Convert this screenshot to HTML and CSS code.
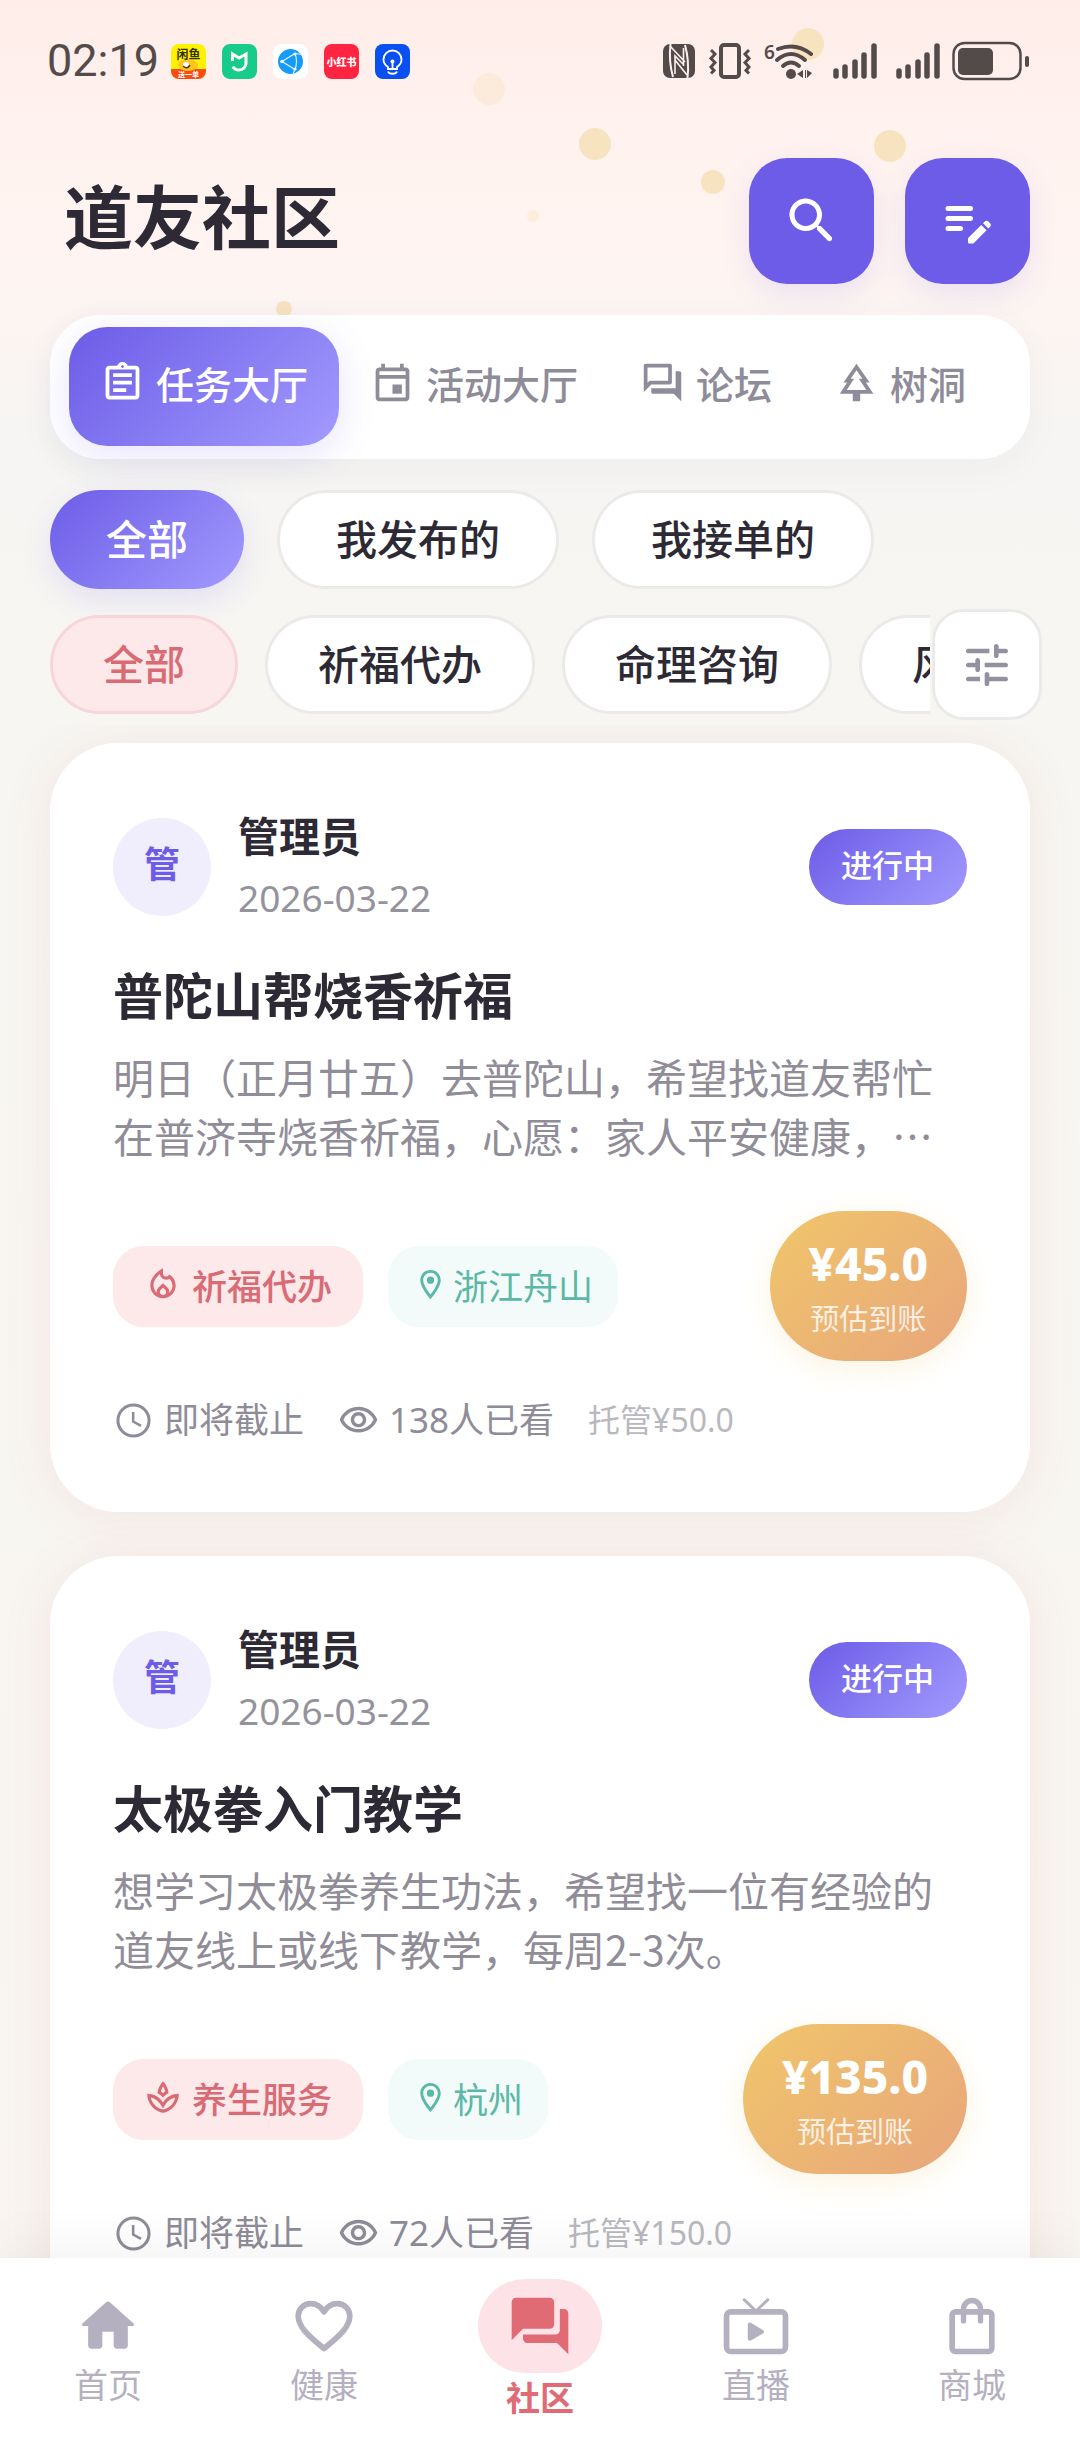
FILE: index.html
```html
<!DOCTYPE html>
<html lang="zh-CN">
<head>
    <meta charset="UTF-8">
    <meta name="viewport" content="width=device-width, initial-scale=1.0">
    <title>道友社区</title>
    <link rel="stylesheet" href="styles.css">
</head>
<body>

    <!-- Ícones reutilizados -->
    <svg class="sprite" aria-hidden="true">
        <symbol id="i-forum" viewBox="0 0 24 24"><path d="M15 4v7H5.17L4 12.17V4h11m1-2H3c-.55 0-1 .45-1 1v14l4-4h10c.55 0 1-.45 1-1V3c0-.55-.45-1-1-1zm5 4h-2v9H6v2c0 .55.45 1 1 1h11l4 4V7c0-.55-.45-1-1-1z"/></symbol>
        <symbol id="i-place" viewBox="0 0 24 24"><path d="M12 2C8.13 2 5 5.13 5 9c0 5.25 7 13 7 13s7-7.75 7-13c0-3.87-3.13-7-7-7zM7 9c0-2.76 2.24-5 5-5s5 2.24 5 5c0 2.88-2.88 7.19-5 9.88C9.92 16.21 7 11.85 7 9z"/><circle cx="12" cy="9" r="2.5"/></symbol>
        <symbol id="i-clock" viewBox="0 0 24 24"><circle cx="12" cy="12" r="9.1" fill="none" stroke="currentColor" stroke-width="1.8"/><path d="M11.8 7v5.6l4.6 2.6" fill="none" stroke="currentColor" stroke-width="1.5"/></symbol>
        <symbol id="i-eye" viewBox="0 0 24 24"><path d="M12 6c3.79 0 7.17 2.13 8.82 5.5C19.17 14.87 15.79 17 12 17s-7.17-2.13-8.82-5.5C4.83 8.13 8.21 6 12 6m0-2C7 4 2.73 7.11 1 11.5 2.73 15.89 7 19 12 19s9.27-3.11 11-7.5C21.27 7.11 17 4 12 4zm0 5c1.38 0 2.5 1.12 2.5 2.5S13.38 14 12 14s-2.5-1.12-2.5-2.5S10.62 9 12 9m0-2c-2.48 0-4.5 2.02-4.5 4.5S9.52 16 12 16s4.5-2.02 4.5-4.5S14.48 7 12 7z"/></symbol>
        <symbol id="i-signal" viewBox="0 0 44 36"><path d="M3 28v5M12 24v9M22 19v14M31 12v21M41 3v30" fill="none" stroke="currentColor" stroke-width="5.5" stroke-linecap="round"/></symbol>
    </svg>

    <!-- Bolhas do fundo -->
    <div class="bubbles" aria-hidden="true">
        <span class="bubble b1"></span>
        <span class="bubble b2"></span>
        <span class="bubble b3"></span>
        <span class="bubble b4"></span>
        <span class="bubble b5"></span>
        <span class="bubble b6"></span>
        <span class="bubble b7"></span>
    </div>

    <div class="status-bar">
        <span class="time">02:19</span>
        <div class="app-icons">
            <svg viewBox="0 0 35 35"><defs><clipPath id="r"><rect width="35" height="35" rx="8"/></clipPath></defs><g clip-path="url(#r)"><rect width="35" height="35" fill="#fff200"/><rect y="25" width="35" height="10" fill="#fb4a12"/><ellipse cx="17" cy="21" rx="10" ry="6" fill="#ffc51f"/><circle cx="15" cy="21" r="3" fill="#fff"/><path d="M12 22q4 4 7-1" stroke="#5a3410" stroke-width="1.5" fill="none"/></g><text x="17.5" y="14.5" font-size="12" font-weight="700" text-anchor="middle" fill="#333000">闲鱼</text><text x="17.5" y="32.5" font-size="7" font-weight="700" text-anchor="middle" fill="#fff">送一单</text></svg>
            <svg viewBox="0 0 35 35"><rect width="35" height="35" rx="8" fill="#17cc8a"/><path d="M10.5 17v-7l6.5 4 7-4v9c0 4-3 7-7 7-3 0-5-1-6-3.5" fill="none" stroke="#fff" stroke-width="3"/></svg>
            <svg viewBox="0 0 35 35"><rect width="35" height="35" rx="8" fill="#fff"/><circle cx="17.5" cy="17.5" r="12.5" fill="#159bf8"/><path d="M9 17.5 22 9.5q3 8 0 16L9 17.5M22 9.5l7 1M22 25.5l-2 4" fill="none" stroke="#d6f1ff" stroke-width="1.2"/><g fill="#fff"><circle cx="9" cy="17.5" r="1.8"/><circle cx="22" cy="10" r="1.6"/><circle cx="22" cy="25" r="1.6"/></g></svg>
            <svg viewBox="0 0 35 35"><rect width="35" height="35" rx="8" fill="#ff2442"/><text x="17.5" y="21.5" font-size="10" font-weight="900" text-anchor="middle" fill="#fff">小红书</text></svg>
            <svg viewBox="0 0 35 35"><rect width="35" height="35" rx="8" fill="#0a50f0"/><path d="M13 25v-2c-3-2-4.5-4.5-4.5-7.5a9 9 0 0 1 18 0c0 3-1.5 5.5-4.5 7.5v2zM13 27.5c1 3 8 3 9 0M17.5 24v-6" fill="none" stroke="#fff" stroke-width="1.8"/><circle cx="17.5" cy="17.5" r="2" fill="#fff"/></svg>
        </div>
        <div class="sys-icons">
            <svg width="34" height="36" viewBox="0 0 34 36"><rect x="1" y="1" width="32" height="34" rx="7" fill="#534b49"/><path d="M8.5 1q-2 17 2.5 33M25.5 35q2-17-2.5-33" fill="none" stroke="#fff0ed" stroke-width="2"/><path d="M13 31V13l9 9M21.5 5v18M8 3l15 16M13 17l12 15" fill="none" stroke="#fff0ed" stroke-width="1.6"/></svg>
            <svg width="44" height="38" viewBox="0 0 44 38"><rect x="13" y="3" width="18" height="32" rx="3" fill="none" stroke="#534b49" stroke-width="4"/><path d="m3 8 4 4-4 4.5 4 4-4 4.5 3 3.5-3 3M41 8l-4 4 4 4.5-4 4 4 4.5-3 3.5 3 3" fill="none" stroke="#534b49" stroke-width="3"/></svg>
            <svg width="50" height="42" viewBox="0 0 50 42"><g fill="none" stroke="#534b49" stroke-width="4" stroke-linecap="round"><path d="M14 9q18-7 33 5"/><path d="M13 20q14-12 28 0"/><path d="M19 26q8-7 16 0"/></g><circle cx="27" cy="34" r="5" fill="#534b49"/><path d="M39 30v8l-6-4zM41 30h1v8h-1zM43 30l5 3-5 5z" fill="#534b49"/><text x="0" y="19" font-size="19" font-weight="600" fill="#534b49">6</text></svg>
            <svg class="signal" width="44" height="36"><use href="#i-signal"/></svg>
            <svg class="signal" width="44" height="36"><use href="#i-signal"/></svg>
            <svg width="78" height="40" viewBox="0 0 78 40"><rect x="1.5" y="2" width="67" height="36" rx="11" fill="none" stroke="#534b49" stroke-width="2.5"/><rect x="6" y="7" width="35" height="27" rx="5" fill="#534b49"/><rect x="73" y="15" width="4" height="11" rx="2" fill="#534b49"/></svg>
        </div>
    </div>

    <header class="header">
        <h1>道友社区</h1>
        <div class="actions">
            <button class="action" aria-label="搜索">
                <svg viewBox="0 0 24 24"><path d="M15.5 14h-.79l-.28-.27c1.2-1.4 1.82-3.31 1.48-5.34-.47-2.78-2.79-5-5.59-5.34-4.23-.52-7.79 3.04-7.27 7.27.34 2.8 2.56 5.12 5.34 5.59 2.03.34 3.94-.28 5.34-1.48l.27.28v.79l4.25 4.25c.41.41 1.08.41 1.49 0 .41-.41.41-1.08 0-1.49L15.5 14zm-6 0C7.01 14 5 11.99 5 9.5S7.01 5 9.5 5 14 7.01 14 9.5 11.99 14 9.5 14z"/></svg>
            </button>
            <button class="action" aria-label="发布">
                <svg viewBox="0 0 24 24"><path d="M4 7h9M4 11h9M4 15h5" fill="none" stroke="currentColor" stroke-width="2" stroke-linecap="round"/><path d="M18.01 12.87l.71-.71c.39-.39 1.02-.39 1.41 0l.71.71c.39.39.39 1.02 0 1.41l-.71.71-2.12-2.12zm-.71.71l-5.16 5.16c-.09.09-.14.21-.14.35v1.41c0 .28.22.5.5.5h1.41c.13 0 .26-.05.35-.15l5.16-5.16-2.12-2.11z"/></svg>
            </button>
        </div>
    </header>

    <nav class="tabs">
        <button class="tab active">
            <svg viewBox="0 0 24 24"><path d="M7 15h7v2H7zm0-4h10v2H7zm0-4h10v2H7zm12-4h-4.18C14.4 1.84 13.3 1 12 1s-2.4.84-2.82 2H5c-1.1 0-2 .9-2 2v14c0 1.1.9 2 2 2h14c1.1 0 2-.9 2-2V5c0-1.1-.9-2-2-2zm-7-.25c.41 0 .75.34.75.75s-.34.75-.75.75-.75-.34-.75-.75.34-.75.75-.75zM19 19H5V5h14v14z"/></svg>
            任务大厅
        </button>
        <button class="tab">
            <svg viewBox="0 0 24 24"><path d="M19 4h-1V2h-2v2H8V2H6v2H5c-1.11 0-1.99.9-1.99 2L3 20c0 1.1.89 2 2 2h14c1.1 0 2-.9 2-2V6c0-1.1-.9-2-2-2zm0 16H5V10h14v10zm0-12H5V6h14v2zm-7 5h5v5h-5z"/></svg>
            活动大厅
        </button>
        <button class="tab">
            <svg><use href="#i-forum"/></svg>
            论坛
        </button>
        <button class="tab">
            <svg viewBox="0 0 24 24"><path d="M17 12h2L12 2 5.05 12H7l-3.9 6h6.92v4h3.95v-4H21l-4-6zM6.79 16l3.9-6H8.88l3.13-4.5 3.15 4.5h-1.9l4 6H6.79z"/></svg>
            树洞
        </button>
    </nav>

    <div class="scope">
        <button class="chip active">全部</button>
        <button class="chip">我发布的</button>
        <button class="chip">我接单的</button>
    </div>

    <div class="filters">
        <div class="categories">
            <button class="chip selected">全部</button>
            <button class="chip">祈福代办</button>
            <button class="chip">命理咨询</button>
            <button class="chip">风水布局</button>
        </div>
        <button class="filter-button" aria-label="筛选">
            <svg viewBox="0 0 24 24"><path d="M3 18c0 .55.45 1 1 1h5v-2H4c-.55 0-1 .45-1 1zM3 6c0 .55.45 1 1 1h9V5H4c-.55 0-1 .45-1 1zm10 14v-1h7c.55 0 1-.45 1-1s-.45-1-1-1h-7v-1c0-.55-.45-1-1-1s-1 .45-1 1v4c0 .55.45 1 1 1s1-.45 1-1zM7 10v1H4c-.55 0-1 .45-1 1s.45 1 1 1h3v1c0 .55.45 1 1 1s1-.45 1-1v-4c0-.55-.45-1-1-1s-1 .45-1 1zm14 2c0-.55-.45-1-1-1h-9v2h9c.55 0 1-.45 1-1zm-5-3c.55 0 1-.45 1-1V7h3c.55 0 1-.45 1-1s-.45-1-1-1h-3V4c0-.55-.45-1-1-1s-1 .45-1 1v4c0 .55.45 1 1 1z"/></svg>
        </button>
    </div>

    <main class="list">
        <article class="card">
            <div class="card-top">
                <div class="avatar">管</div>
                <div class="author">
                    <div class="name">管理员</div>
                    <time class="date">2026-03-22</time>
                </div>
                <span class="state">进行中</span>
            </div>
            <h2>普陀山帮烧香祈福</h2>
            <p class="desc">明日（正月廿五）去普陀山，希望找道友帮忙<br>在普济寺烧香祈福，心愿：家人平安健康，…</p>
            <div class="card-mid">
                <span class="tag">
                    <svg viewBox="0 0 24 24"><path d="M16 6l-.44.55C14.38 8.02 12 7.19 12 5.3V2S4 6 4 13c0 4.42 3.58 8 8 8s8-3.58 8-8c0-2.96-1.61-5.62-4-7zm-4 13c-1.1 0-2-.87-2-1.94 0-.51.2-.99.58-1.36L12 14.3l1.43 1.4c.37.37.57.85.57 1.36 0 1.07-.9 1.94-2 1.94zm3.96-1.5c.04-.36.22-1.89-1.13-3.22L12 11.5l-2.83 2.78C7.81 15.62 8 17.16 8.04 17.5 6.79 16.4 6 14.79 6 13c0-3.16 2.13-5.65 4.03-7.25.23 1.99 1.93 3.55 3.99 3.55.78 0 1.54-.23 2.18-.66A7.175 7.175 0 0 1 18 13c0 1.79-.79 3.4-2.04 4.5z"/></svg>
                    祈福代办
                </span>
                <span class="tag place">
                    <svg><use href="#i-place"/></svg>
                    浙江舟山
                </span>
                <div class="price">
                    <strong>¥45.0</strong>
                    <span>预估到账</span>
                </div>
            </div>
            <div class="meta">
                <span class="meta-item"><svg><use href="#i-clock"/></svg>即将截止</span>
                <span class="meta-item"><svg><use href="#i-eye"/></svg>138人已看</span>
                <span class="escrow">托管¥50.0</span>
            </div>
        </article>

        <article class="card">
            <div class="card-top">
                <div class="avatar">管</div>
                <div class="author">
                    <div class="name">管理员</div>
                    <time class="date">2026-03-22</time>
                </div>
                <span class="state">进行中</span>
            </div>
            <h2>太极拳入门教学</h2>
            <p class="desc">想学习太极拳养生功法，希望找一位有经验的<br>道友线上或线下教学，每周2-3次。</p>
            <div class="card-mid">
                <span class="tag">
                    <svg viewBox="0 0 24 24"><path d="M15.49 9.63c-.18-2.79-1.31-5.51-3.43-7.63-2.14 2.14-3.32 4.86-3.55 7.63 1.28.68 2.46 1.56 3.49 2.63 1.03-1.06 2.21-1.94 3.49-2.63zm-3.44-4.44c.63 1.03 1.07 2.18 1.3 3.38-.47.3-.91.63-1.34.98-.42-.34-.87-.67-1.33-.97.25-1.2.71-2.35 1.37-3.39zM12 15.45C9.85 12.17 6.18 10 2 10c0 5.32 3.36 9.82 8.03 11.49.63.23 1.29.4 1.97.51.68-.12 1.33-.29 1.97-.51C18.64 19.82 22 15.32 22 10c-4.18 0-7.85 2.17-10 5.45zm1.32 4.15c-.44.15-.88.27-1.33.37-.44-.09-.87-.21-1.28-.36-3.29-1.18-5.7-3.99-6.45-7.35 1.1.26 2.15.71 3.12 1.33.99.72 2.28 1.92 2.95 2.96L12 19.1l1.67-2.55a10.19 10.19 0 0 1 2.86-2.9c.98-.65 2.07-1.13 3.21-1.4-.75 3.37-3.15 6.18-6.42 7.35z"/></svg>
                    养生服务
                </span>
                <span class="tag place">
                    <svg><use href="#i-place"/></svg>
                    杭州
                </span>
                <div class="price">
                    <strong>¥135.0</strong>
                    <span>预估到账</span>
                </div>
            </div>
            <div class="meta">
                <span class="meta-item"><svg><use href="#i-clock"/></svg>即将截止</span>
                <span class="meta-item"><svg><use href="#i-eye"/></svg>72人已看</span>
                <span class="escrow">托管¥150.0</span>
            </div>
        </article>
    </main>

    <nav class="bottom-nav">
        <a href="#">
            <svg viewBox="0 0 24 24"><path d="M10 19v-5h4v5c0 .55.45 1 1 1h3c.55 0 1-.45 1-1v-7h1.7c.46 0 .68-.57.33-.87L12.67 3.6c-.38-.34-.96-.34-1.34 0l-8.36 7.53c-.34.3-.13.87.33.87H5v7c0 .55.45 1 1 1h3c.55 0 1-.45 1-1z"/></svg>
            首页
        </a>
        <a href="#">
            <svg viewBox="0 0 24 24"><path d="M12 20C7 15.7 2.9 12.6 2.9 8.5 2.9 6 4.8 4.1 7.3 4.1c1.9 0 3.6 1 4.7 2.9 1.1-1.9 2.8-2.9 4.7-2.9 2.5 0 4.4 1.9 4.4 4.4 0 4.1-4.1 7.2-9.1 11.5z" fill="none" stroke="currentColor" stroke-width="2" stroke-linejoin="round"/></svg>
            健康
        </a>
        <a href="#" class="current">
            <span class="pill">
                <svg viewBox="0 0 24 24"><path d="M20.5 6H19v7.5c0 .8-.7 1.5-1.5 1.5H6v1.5c0 .8.7 1.5 1.5 1.5H18l4 4V7.5c0-.8-.7-1.5-1.5-1.5zM17 11.5v-8c0-.8-.7-1.5-1.5-1.5h-12C2.7 2 2 2.7 2 3.5V17l4-4h9.5c.8 0 1.5-.7 1.5-1.5z"/></svg>
            </span>
            社区
        </a>
        <a href="#">
            <svg viewBox="0 0 24 24"><rect x="1.6" y="7" width="20.8" height="14" rx="1.5" fill="none" stroke="currentColor" stroke-width="2"/><path d="m7.8 2.7 4.2 4 4.2-4" fill="none" stroke="currentColor" stroke-width="1" stroke-linecap="round"/><path d="M9.8 11.5v5l4.3-2.5z" stroke="currentColor" stroke-width="1.4" stroke-linejoin="round"/></svg>
            直播
        </a>
        <a href="#">
            <svg viewBox="0 0 24 24"><rect x="5" y="7" width="14" height="14" rx="1.2" fill="none" stroke="currentColor" stroke-width="2"/><path d="M9 10.2V6a3 3 0 0 1 6 0v4.2" fill="none" stroke="currentColor" stroke-width="1.9" stroke-linecap="round"/></svg>
            商城
        </a>
    </nav>

</body>
</html>
```

FILE: styles.css
```css
* {
    box-sizing: border-box;
}

body {
    margin: 0;
    height: 100vh;
    display: flex;
    flex-direction: column;
    overflow: hidden;
    position: relative;
    font-family: "Noto Sans", "Noto Sans CJK SC", sans-serif;
    color: #2d2a35;
    background: linear-gradient(to bottom, #ffede9 0, #fff2ef 130px, #fff4f1 250px, #f6f5f3 440px, #f7f6f2 800px, #f9f5f0 100%);
}

button {
    font-family: inherit;
    border: none;
    margin: 0;
    padding: 0;
    color: inherit;
    cursor: pointer;
    white-space: nowrap;
    flex-shrink: 0;
}

svg {
    display: block;
    flex-shrink: 0;
    fill: currentColor;
}

.sprite {
    position: absolute;
    width: 0;
    height: 0;
}

.bubbles {
    position: absolute;
    top: 0;
    left: 0;
    right: 0;
    height: 330px;
    z-index: -1;
}

.bubble {
    position: absolute;
    width: 32px;
    height: 32px;
    border-radius: 50%;
    background-color: #f8e3c0;
}

.b1 { left: 473px; top: 73px; opacity: 0.4; }
.b2 { left: 792px; top: 28px; }
.b3 { left: 579px; top: 128px; }
.b4 { left: 701px; top: 170px; width: 24px; height: 24px; }
.b5 { left: 874px; top: 130px; }
.b6 { left: 276px; top: 301px; width: 16px; height: 16px; }
.b7 { left: 527px; top: 210px; width: 12px; height: 12px; opacity: 0.4; }

/* Barra de status */
.status-bar {
    display: flex;
    align-items: center;
    height: 46px;
    margin: 38px 50px 0 47px;
    color: #534b49;
}

.time {
    font-family: Roboto, sans-serif;
    font-size: 45px;
    line-height: 46px;
}

.app-icons {
    display: flex;
    gap: 16px;
    margin-left: 12px;
}

.app-icons svg {
    width: 35px;
    height: 35px;
}

.sys-icons {
    display: flex;
    align-items: center;
    gap: 12px;
    margin-left: auto;
}

.signal {
    margin-left: 7px;
}

/* Cabeçalho */
.header {
    display: flex;
    align-items: center;
    justify-content: space-between;
    margin: 74px 50px 0 64px;
}

h1 {
    margin: 0 0 8px;
    font-size: 69px;
    line-height: 80px;
    font-weight: 700;
}

.actions {
    display: flex;
    gap: 31px;
}

.action {
    display: flex;
    align-items: center;
    justify-content: center;
    width: 125px;
    height: 126px;
    border-radius: 38px;
    background-color: #6c5ce7;
    color: #fff;
    box-shadow: 0 10px 30px rgba(108, 92, 231, 0.12);
}

.action svg {
    width: 60px;
    height: 60px;
}

/* Abas */
.tabs {
    display: flex;
    margin: 31px 50px 0;
    padding: 12px 19px 13px;
    border-radius: 50px;
    background-color: #fff;
    box-shadow: 0 10px 38px rgba(60, 50, 50, 0.04);
}

.tab {
    display: flex;
    align-items: center;
    gap: 11px;
    height: 119px;
    padding: 0 31px 8px;
    border-radius: 38px;
    background: none;
    color: #8f8c99;
    font-size: 38px;
    font-weight: 500;
}

.tab svg {
    width: 45px;
    height: 45px;
}

.tab.active {
    color: #fff;
    background: linear-gradient(135deg, #6c5ce7, #a29bfe);
    box-shadow: 0 10px 38px rgba(108, 92, 231, 0.16);
}

/* Filtros */
.chip {
    height: 99px;
    padding: 0 50px 6px;
    border: 3px solid #ebeae8;
    border-radius: 50px;
    background-color: #fff;
    font-size: 41px;
    font-weight: 500;
}

.scope {
    display: flex;
    gap: 33px;
    margin: 31px 50px 0;
}

.scope .chip {
    padding: 0 56px 6px;
}

.scope .chip.active {
    padding: 0 53px 6px;
    border-color: transparent;
    color: #fff;
    background: linear-gradient(135deg, #6c5ce7, #a29bfe) border-box;
    box-shadow: 0 10px 30px rgba(108, 92, 231, 0.14);
}

.filters {
    display: flex;
    align-items: center;
    gap: 2px;
    margin: 20px 38px 5px 50px;
}

.categories {
    display: flex;
    flex: 1;
    gap: 27px;
    overflow: hidden;
}

.chip.selected {
    color: #d96b75;
    background-color: #fde8ea;
    border-color: #f8d5d9;
}

.filter-button {
    display: flex;
    align-items: center;
    justify-content: center;
    width: 110px;
    height: 111px;
    border: 3px solid #ebeae8;
    border-radius: 32px;
    background-color: #fff;
    color: #9390a0;
}

.filter-button svg {
    width: 56px;
    height: 56px;
}

/* Lista de tarefas */
.list {
    flex: 1;
    min-height: 0;
    overflow: hidden;
    display: flex;
    flex-direction: column;
    gap: 44px;
    padding: 18px 50px 44px;
}

.card {
    flex-shrink: 0;
    padding: 63px;
    border-radius: 68px;
    background-color: #fff;
    box-shadow: 0 4px 50px rgba(200, 90, 100, 0.1);
}

.card-top {
    display: flex;
    align-items: center;
}

.avatar {
    width: 98px;
    height: 98px;
    border-radius: 50%;
    background-color: #f0edfd;
    color: #6c5ce7;
    font-size: 36px;
    line-height: 94px;
    font-weight: 600;
    text-align: center;
}

.author {
    flex: 1;
    margin-left: 27px;
    line-height: 61px;
}

.name {
    font-size: 41px;
    font-weight: 600;
}

.date {
    display: block;
    font-size: 37px;
    color: #94929c;
}

.state {
    padding: 0 33px 4px 32px;
    border-radius: 38px;
    background: linear-gradient(135deg, #6c5ce7, #a29bfe);
    color: #fff;
    font-size: 31px;
    line-height: 72px;
    font-weight: 500;
}

h2 {
    margin: 33px 0 0;
    font-size: 50px;
    line-height: 70px;
    font-weight: 600;
}

.desc {
    margin: 16px 0 0;
    font-family: "Noto Sans CJK SC", "Noto Sans", sans-serif;
    font-size: 41px;
    line-height: 59px;
    color: #908d99;
    white-space: nowrap;
}

.card-mid {
    display: flex;
    align-items: center;
    gap: 25px;
    margin-top: 46px;
}

.tag {
    display: flex;
    align-items: center;
    gap: 10px;
    height: 81px;
    padding: 0 31px 4px;
    border-radius: 31px;
    background-color: #fde8ea;
    color: #d96b75;
    font-size: 35px;
    font-weight: 500;
}

.tag svg {
    width: 38px;
    height: 38px;
}

.tag.place {
    gap: 5px;
    padding: 0 25px 4px;
    background-color: #f2fbfa;
    color: #5bb8a6;
    font-weight: 400;
}

.tag.place svg {
    width: 35px;
    height: 35px;
}

.price {
    display: flex;
    flex-direction: column;
    align-items: center;
    justify-content: center;
    height: 150px;
    margin-left: auto;
    padding: 4px 39px 0;
    border-radius: 75px;
    background: linear-gradient(135deg, #f0c66a, #e8a57c);
    color: #fff;
    box-shadow: 0 8px 30px rgba(240, 198, 106, 0.2);
}

.price strong {
    font-size: 46px;
    line-height: 62px;
    font-weight: 800;
}

.price span {
    font-size: 29px;
    line-height: 50px;
    opacity: 0.8;
}

.meta {
    display: flex;
    align-items: center;
    gap: 34px;
    height: 54px;
    margin: 32px 0 2px;
    color: #8f8c99;
    font-size: 35px;
    line-height: 50px;
}

.meta-item {
    display: flex;
    align-items: center;
    gap: 10px;
}

.meta svg {
    width: 41px;
    height: 41px;
}

.escrow {
    font-size: 32px;
    color: #b9b8be;
}

/* Menu inferior */
.bottom-nav {
    display: flex;
    flex-shrink: 0;
    height: 182px;
    background-color: #fff;
    box-shadow: 0 -10px 50px rgba(0, 0, 0, 0.05);
    z-index: 1;
}

.bottom-nav a {
    flex: 1;
    display: flex;
    flex-direction: column;
    align-items: center;
    justify-content: center;
    gap: 3px;
    color: #b5b0c0;
    font-size: 34px;
    line-height: 44px;
    text-decoration: none;
}

.bottom-nav svg {
    width: 68px;
    height: 68px;
}

.bottom-nav .current {
    color: #e06b75;
    font-weight: 600;
}

.pill {
    display: flex;
    align-items: center;
    justify-content: center;
    width: 124px;
    height: 94px;
    border-radius: 47px;
    background-color: #fde2e7;
}
```
